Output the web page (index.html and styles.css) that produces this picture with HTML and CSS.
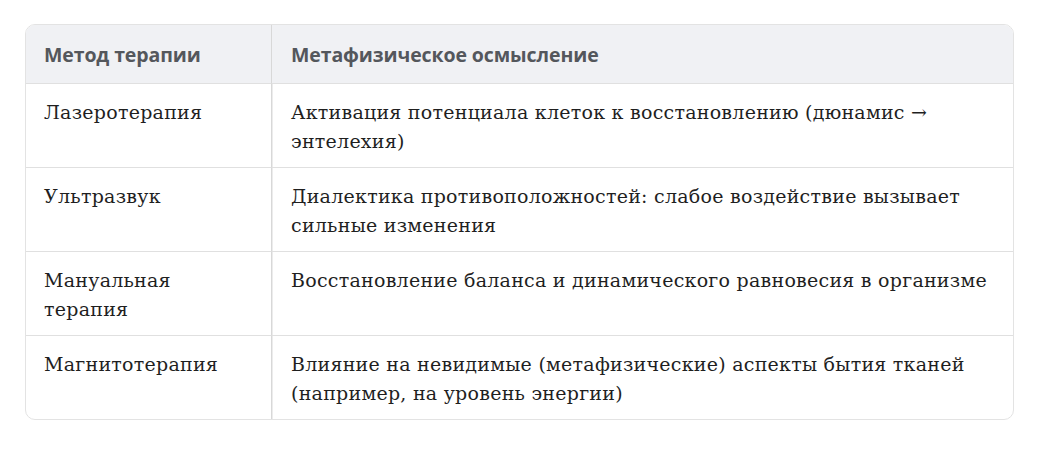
FILE: index.html
```html
<!DOCTYPE html>
<html lang="ru">
<head>
<meta charset="utf-8">
<link rel="stylesheet" href="styles.css">
</head>
<body>
<div class="wrap">
  <table class="tbl">
    <thead>
      <tr><th class="c1">Метод терапии</th><th class="c2">Метафизическое осмысление</th></tr>
    </thead>
    <tbody>
      <tr><td class="c1">Лазеротерапия</td><td class="c2">Активация потенциала клеток к восстановлению (дюнамис → энтелехия)</td></tr>
      <tr><td class="c1">Ультразвук</td><td class="c2">Диалектика противоположностей: слабое воздействие вызывает сильные изменения</td></tr>
      <tr><td class="c1">Мануальная терапия</td><td class="c2">Восстановление баланса и динамического равновесия в организме</td></tr>
      <tr><td class="c1">Магнитотерапия</td><td class="c2">Влияние на невидимые (метафизические) аспекты бытия тканей (например, на уровень энергии)</td></tr>
    </tbody>
  </table>
</div>
</body>
</html>
```
FILE: styles.css
```css
html, body { margin: 0; padding: 0; background: #fff; }
.wrap { padding: 24px 27px 0 25px; }
.tbl {
  width: 989px;
  border-collapse: separate;
  border-spacing: 0;
  border: 1px solid #e3e3e3;
  border-radius: 10px;
  overflow: hidden;
}
.tbl th, .tbl td { text-align: left; vertical-align: top; padding: 0 19px; }
.tbl .c1 { padding-left: 18px; }
.tbl th {
  background: #f0f1f4;
  font-family: "Open Sans", sans-serif;
  font-weight: 700;
  font-size: 19.5px;
  letter-spacing: -0.1px;
  color: #54575c;
  height: 58px;
  vertical-align: middle;
  border-bottom: 1px solid #e0e0e0;
}
.tbl td {
  font-family: "DejaVu Serif", serif;
  font-size: 19px;
  line-height: 29px;
  letter-spacing: 0.25px;
  color: #1f1f1f;
  height: 83px;
  padding-top: 14px;
  padding-bottom: 11px;
  box-sizing: border-box;
}
.tbl tbody tr + tr td { border-top: 1px solid #e0e0e0; }
.c1 { width: 208px; border-right: 1px solid #d8d8d8; box-shadow: 1px 0 0 #ececec; }
```
